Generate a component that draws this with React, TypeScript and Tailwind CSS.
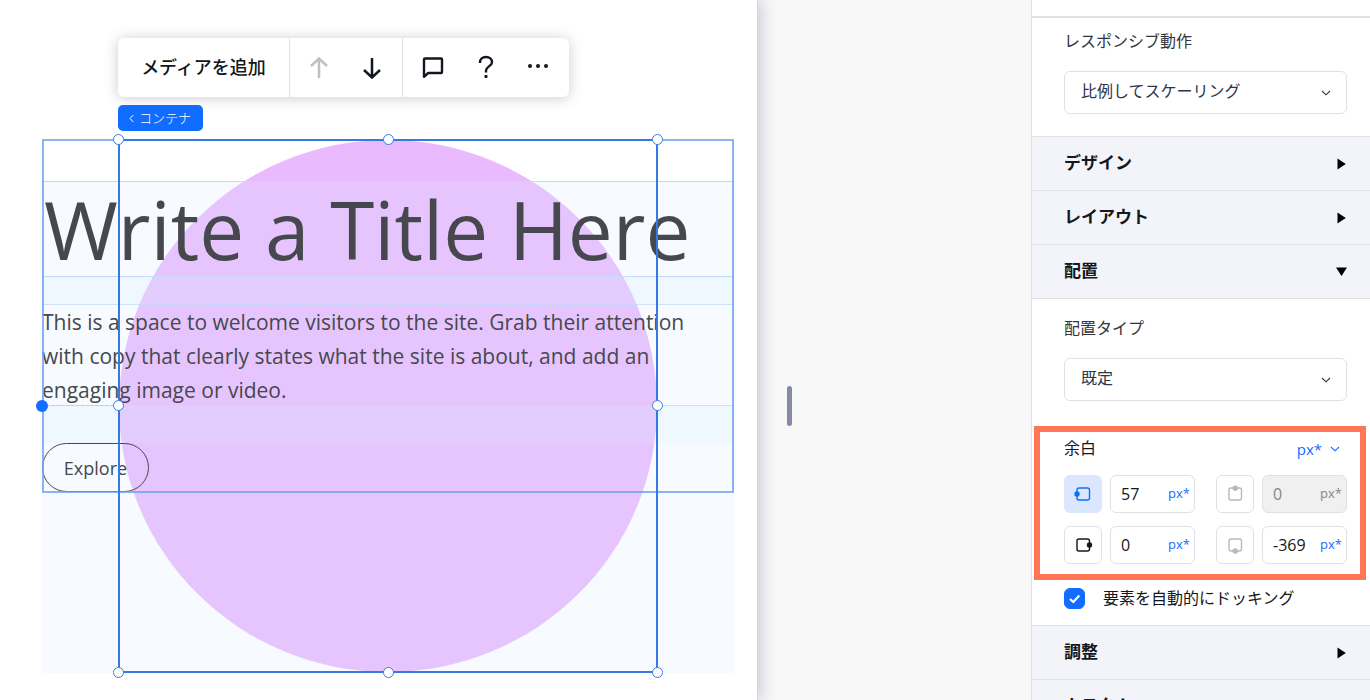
import { useState } from "react";
import type { ReactNode } from "react";

type Side = "left" | "right" | "top" | "bottom";

const dotPositions: Record<Side, { cx: number; cy: number }> = {
  left: { cx: 2, cy: 8 },
  right: { cx: 14.5, cy: 8 },
  top: { cx: 8.25, cy: 2.2 },
  bottom: { cx: 8.25, cy: 14 },
};

const margins: {
  side: Side;
  label: string;
  value: string;
  disabled?: boolean;
  button: string;
}[] = [
  { side: "left", label: "左", value: "57", button: "border-[#dbe7ff] bg-[#dbe7ff] text-[#116dff]" },
  { side: "top", label: "上", value: "0", disabled: true, button: "border-[#dfe1e6] bg-white text-[#b8b9bd]" },
  { side: "right", label: "右", value: "0", button: "border-[#dfe1e6] bg-white text-[#131720]" },
  { side: "bottom", label: "下", value: "-369", button: "border-[#dfe1e6] bg-white text-[#b8b9bd]" },
];

const handles = [
  "-left-[7px] -top-[7px]",
  "left-1/2 -ml-[5px] -top-[7px]",
  "-right-[7px] -top-[7px]",
  "-left-[7px] top-1/2 -mt-[6px]",
  "-right-[7px] top-1/2 -mt-[6px]",
  "-left-[7px] -bottom-[7px]",
  "left-1/2 -ml-[5px] -bottom-[7px]",
  "-right-[7px] -bottom-[7px]",
];

function DockIcon({ side }: { side: Side }) {
  const { cx, cy } = dotPositions[side];
  return (
    <svg width="18" height="16" viewBox="-1 0 18 16" fill="none" aria-hidden="true" className="overflow-visible">
      <rect x="2" y="2" width="12.5" height="12" rx="2" stroke="currentColor" strokeWidth="1.4" />
      <circle cx={cx} cy={cy} r="2.7" fill="currentColor" />
    </svg>
  );
}

function Chevron({ className }: { className?: string }) {
  return (
    <svg width="10" height="6" viewBox="0 0 10 6" fill="none" aria-hidden="true" className={className}>
      <path d="M1 1L5 4.8L9 1" stroke="currentColor" strokeWidth="1.1" />
    </svg>
  );
}

function ToolButton({ label, disabled, children }: { label: string; disabled?: boolean; children: ReactNode }) {
  return (
    <button
      aria-label={label}
      disabled={disabled}
      className="flex h-full w-[53px] items-center justify-center text-[#131720] disabled:text-[#bfbfc2]"
    >
      {children}
    </button>
  );
}

function Toolbar() {
  return (
    <div className="flex h-[59px] w-max rounded-md bg-white shadow-[0_1px_14px_rgba(19,23,32,0.22)]">
      <button className="w-[172px] border-r border-[#dfe1e6] pb-[3px] text-center text-lg font-medium text-[#131720]">
        メディアを追加
      </button>
      <div className="flex w-[113px] justify-center border-r border-[#dfe1e6] pr-px">
        <ToolButton label="前へ" disabled>
          <svg width="20" height="22" viewBox="0 0 20 22" fill="none" stroke="currentColor" strokeWidth="2.5">
            <path d="M10 21V1.500M2 9L10 1.500L18 9" />
          </svg>
        </ToolButton>
        <ToolButton label="次へ">
          <svg width="20" height="22" viewBox="0 0 20 22" fill="none" stroke="currentColor" strokeWidth="2.5">
            <path d="M10 1V20.500M2 13L10 20.500L18 13" />
          </svg>
        </ToolButton>
      </div>
      <div className="flex w-[166px] pl-[3px] pb-px">
        <ToolButton label="コメント">
          <svg width="22" height="22" viewBox="0 0 22 22" fill="none" stroke="currentColor" strokeWidth="2.4" strokeLinejoin="round">
            <path d="M3 2.500H19.200C19.700 2.500 20 2.800 20 3.300V16.200C20 16.700 19.700 17 19.200 17H6.200L2 20.800V3.500C2 2.900 2.400 2.500 3 2.500Z" />
          </svg>
        </ToolButton>
        <ToolButton label="ヘルプ">
          <svg width="16" height="24" viewBox="0 0 16 24" fill="none">
            <path
              d="M2 8V7.500C2 4 4.500 2 8 2C11.500 2 14 4.100 14 7.200C14 11 8 11.800 8 15.500V17.500"
              stroke="currentColor"
              strokeWidth="2.400"
            />
            <rect x="6.500" y="20" width="3" height="3" rx="0.800" fill="currentColor" />
          </svg>
        </ToolButton>
        <ToolButton label="その他">
          <svg width="22" height="6" viewBox="0 0 22 6" fill="currentColor">
            <circle cx="2" cy="2" r="2" />
            <circle cx="10" cy="2" r="2" />
            <circle cx="18" cy="2" r="2" />
          </svg>
        </ToolButton>
      </div>
    </div>
  );
}

function Stage() {
  return (
    <div className="relative mr-[23px] ml-[42px] h-[534px] font-['Open_Sans','Noto_Sans',sans-serif] text-[#46484d]">
      <div className="absolute inset-y-px right-[77px] left-[77px] rounded-[50%] bg-[#e9bafe]" />

      {/* Page section */}
      <div className="relative flex h-full flex-col pt-[42px]">
        <div className="flex-1 bg-[#dcedff]/22">
          <h1 className="h-[96px] border-y border-[#c3d9f7] pl-[2px] text-[80px] leading-[94px] font-normal whitespace-nowrap">
            Write a Title Here
          </h1>
          <div className="h-[27px] bg-[#d7ebff]/22" />
          <p className="h-[101px] border-t border-[#c3d9f7]/80 pr-7 text-[21px] leading-[34px]">
            This is a space to welcome visitors to the site. Grab their attention with copy that clearly states what
            the site is about, and add an engaging image or video.
          </p>
          <div className="h-[38px] border-t border-[#c3d9f7]/80 bg-[#d7ebff]/22" />
          <button className="h-[49px] w-[107px] rounded-full border border-[#46484d] text-lg">Explore</button>
        </div>
      </div>

      {/* Parent outline */}
      <div className="pointer-events-none absolute inset-x-0 top-0 h-[354px] border-2 border-[#6ba3f0]/80" />

      {/* Docking line */}
      <div className="absolute top-[266px] left-0 w-[76px] border-t border-dashed border-[#b5c8f0]" />
      <div className="absolute top-[261px] -left-[6px] size-[12px] rounded-full bg-[#116dff]" />

      {/* Selection box */}
      <div className="pointer-events-none absolute inset-y-0 right-[76px] left-[76px] border-2 border-[#357ae3]">
        {handles.map((position) => (
          <span
            key={position}
            className={`absolute size-[11px] rounded-full border border-[#3b7be0] bg-white ${position}`}
          />
        ))}
      </div>
    </div>
  );
}

function SelectField({ id, label, value }: { id: string; label: string; value: string }) {
  return (
    <div className="pr-[23px] pl-8">
      <label htmlFor={id} className="block text-base leading-6 text-[#32353d]">
        {label}
      </label>
      <div className="relative mt-[19px]">
        <select
          id={id}
          className="h-[43px] w-full appearance-none rounded-md border border-[#dfe1e6] bg-white px-4 pb-[5px] text-base text-[#2b3748]"
        >
          <option>{value}</option>
        </select>
        <Chevron className="pointer-events-none absolute top-[19px] right-4 text-[#2b3748]" />
      </div>
    </div>
  );
}

function SectionHeader({ title, open }: { title: string; open?: boolean }) {
  return (
    <button
      aria-expanded={!!open}
      className="flex h-[54px] w-full shrink-0 items-center justify-between border-b border-[#dfe1e6] bg-[#f3f4f9] pr-[23px] pl-8 text-left text-[17px] font-bold text-[#131720]"
    >
      <span className="pb-1">{title}</span>
      <svg width="11" height="12" viewBox="0 0 11 12" fill="black" aria-hidden="true" className="overflow-visible">
        <path d={open ? "M0 1.500H11L5.500 10Z" : "M1.500 0.500V11.500L9.800 6Z"} />
      </svg>
    </button>
  );
}

function MarginBox() {
  return (
    <fieldset className="mt-[25px] mr-1 ml-[2px] min-w-0 border-6 border-[#ff7555] pt-[3px] pr-[13px] pb-[10px] pl-6">
      <div className="flex items-center justify-between">
        <span className="pb-1 text-base leading-6 text-[#131720]">余白</span>
        <button className="flex items-center gap-2 pr-[7px] font-['Open_Sans',sans-serif] text-[15px] text-[#116dff]">
          px*
          <Chevron />
        </button>
      </div>
      <div className="mt-3 grid grid-cols-2 gap-x-[21px] gap-y-[13px]">
        {margins.map(({ side, label, value, disabled, button }) => (
          <div key={side} className="flex gap-2">
            <button
              aria-label={label}
              className={`flex size-[38px] shrink-0 items-center justify-center rounded-md border ${button}`}
            >
              <DockIcon side={side} />
            </button>
            <label
              className={`flex h-[38px] min-w-0 flex-1 items-center rounded-md border border-[#dfe1e6] pr-1 pl-[10px] font-['Open_Sans',sans-serif] ${
                disabled ? "bg-[#f0f0f0] text-[#868686]" : "bg-white text-[#131720]"
              }`}
            >
              <input
                aria-label={`${label}の余白`}
                defaultValue={value}
                disabled={disabled}
                className="w-0 min-w-0 flex-1 bg-transparent text-base outline-none"
              />
              <span className={disabled ? "text-[13px]" : "text-[13px] text-[#116dff]"}>px*</span>
            </label>
          </div>
        ))}
      </div>
    </fieldset>
  );
}

function Inspector() {
  const [docked, setDocked] = useState(true);

  return (
    <aside className="flex w-[339px] shrink-0 flex-col overflow-hidden border-l border-[#dfe1e6] bg-white">
      <div className="h-[18px] shrink-0 border-b-2 border-[#dfe1e6]" />
      <div className="border-b border-[#dfe1e6] pt-[10px] pb-[22px]">
        <SelectField id="responsive" label="レスポンシブ動作" value="比例してスケーリング" />
      </div>
      <SectionHeader title="デザイン" />
      <SectionHeader title="レイアウト" />
      <SectionHeader title="配置" open />

      <div className="border-b border-[#dfe1e6] pt-4 pb-4">
        <SelectField id="position" label="配置タイプ" value="既定" />
        <MarginBox />
        <label className="mt-2 flex items-center pl-8 text-base leading-[21px] text-[#131720]">
          <span className="relative flex size-[21px]">
            <input
              type="checkbox"
              checked={docked}
              onChange={(e) => setDocked(e.target.checked)}
              className="peer size-full appearance-none rounded-md border border-[#116dff] checked:bg-[#116dff]"
            />
            <svg
              viewBox="0 0 21 21"
              fill="none"
              className="pointer-events-none absolute inset-0 hidden peer-checked:block"
            >
              <path d="M6 11L9.300 14L15.300 7.500" stroke="white" strokeWidth="2.200" />
            </svg>
          </span>
          <span className="-mt-[3px] ml-[18px]">要素を自動的にドッキング</span>
        </label>
      </div>

      <SectionHeader title="調整" />
      <SectionHeader title="カスタム" />
    </aside>
  );
}

export default function App() {
  return (
    <div className="flex h-screen overflow-hidden bg-[#f8f8f9] font-['Noto_Sans_CJK_JP',sans-serif]">
      <main className="relative min-w-0 flex-1 border-r border-[#d5d5e0] bg-white pt-[38px] shadow-[2px_0_16px_rgba(70,70,120,0.3)]">
        <div className="ml-[118px]">
          <Toolbar />
          <button className="mt-2 mb-2 flex h-[26px] w-[85px] items-center gap-[5px] rounded-[5px] bg-[#116dff] pl-[11px] text-[13px] font-light text-white">
            <svg width="5" height="9" viewBox="0 0 5 9" fill="none" aria-hidden="true">
              <path d="M4.300 1L1 4.500L4.300 8" stroke="currentColor" />
            </svg>
            コンテナ
          </button>
        </div>
        <Stage />
      </main>

      {/* Resize gutter */}
      <div className="flex w-[273px] shrink-0 items-center pt-[112px] pl-[29px]">
        <div className="h-10 w-[5px] rounded-full bg-[#868aa5]" />
      </div>

      <Inspector />
    </div>
  );
}
